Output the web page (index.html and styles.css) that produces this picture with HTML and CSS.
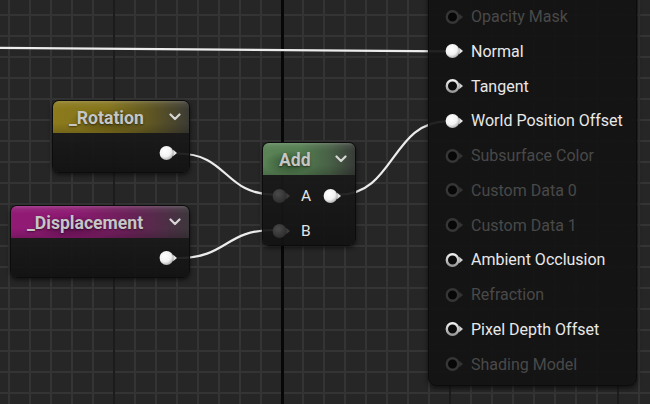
FILE: index.html
```html
<!DOCTYPE html>
<html>
<head>
<meta charset="utf-8">
<link rel="stylesheet" href="styles.css">
</head>
<body>
<div class="graph">
  <svg class="defs" width="0" height="0">
    <defs>
      <radialGradient id="gWhite" cx="40%" cy="35%" r="70%">
        <stop offset="0" stop-color="#ffffff"/>
        <stop offset="0.6" stop-color="#f2f2f2"/>
        <stop offset="1" stop-color="#a8a8a8"/>
      </radialGradient>
      <radialGradient id="gDark" cx="40%" cy="35%" r="70%">
        <stop offset="0" stop-color="#4a4a4a"/>
        <stop offset="1" stop-color="#2c2c2c"/>
      </radialGradient>
      <linearGradient id="gRing" x1="0" y1="0" x2="0" y2="1">
        <stop offset="0" stop-color="#f0f0f0"/>
        <stop offset="1" stop-color="#9a9a9a"/>
      </linearGradient>
      <symbol id="pin-fill" viewBox="0 0 20 16">
        <circle cx="7.5" cy="8" r="6.9" fill="url(#gWhite)"/>
        <path d="M14.2,4.8 L18,8 L14.2,11.2 Z" fill="#e6e6e6"/>
      </symbol>
      <symbol id="pin-dark" viewBox="0 0 20 16">
        <circle cx="7.5" cy="8" r="6.9" fill="url(#gDark)"/>
        <path d="M14.2,4.8 L18,8 L14.2,11.2 Z" fill="#3c3c3c"/>
      </symbol>
      <symbol id="pin-ring" viewBox="0 0 20 16">
        <circle cx="7.5" cy="8" r="5.7" fill="#0b0b0b" stroke="url(#gRing)" stroke-width="2.4"/>
        <path d="M14.2,4.8 L18,8 L14.2,11.2 Z" fill="#d0d0d0"/>
      </symbol>
      <symbol id="pin-off" viewBox="0 0 20 16">
        <circle cx="7.5" cy="8" r="5.7" fill="#070707" stroke="#363636" stroke-width="2.4"/>
        <path d="M14.2,4.8 L18,8 L14.2,11.2 Z" fill="#343434"/>
      </symbol>
      <symbol id="chev" viewBox="0 0 12 8">
        <path d="M1.5,1.5 L6,6 L10.5,1.5" fill="none" stroke="#d6d6d6" stroke-width="2.2" stroke-linecap="round" stroke-linejoin="round"/>
      </symbol>
    </defs>
  </svg>

  <svg class="wires" width="650" height="404" viewBox="0 0 650 404">
    <g fill="none" stroke="#ececec" stroke-width="2.2" stroke-linecap="round">
      <path d="M0,47.8 L447,51.3"/>
      <path d="M178,153.5 C228,153.5 224,194.5 274,194.5"/>
      <path d="M178,258 C228,258 224,230 274,230"/>
      <path d="M340,194.5 C394,194.5 392,121.3 447,121.3"/>
    </g>
  </svg>

  <div class="node node-rotation">
    <div class="node-head head-yellow">
      <span class="node-title">_Rotation</span>
      <svg class="chev"><use href="#chev"/></svg>
    </div>
    <div class="node-body param-body">
      <svg class="pin"><use href="#pin-fill"/></svg>
    </div>
  </div>

  <div class="node node-displacement">
    <div class="node-head head-magenta">
      <span class="node-title">_Displacement</span>
      <svg class="chev"><use href="#chev"/></svg>
    </div>
    <div class="node-body param-body">
      <svg class="pin"><use href="#pin-fill"/></svg>
    </div>
  </div>

  <div class="node node-add">
    <div class="node-head head-green">
      <span class="node-title">Add</span>
      <svg class="chev"><use href="#chev"/></svg>
    </div>
    <div class="node-body add-body">
      <div class="add-row">
        <svg class="pin"><use href="#pin-dark"/></svg>
        <span class="add-label">A</span>
        <svg class="pin"><use href="#pin-fill"/></svg>
      </div>
      <div class="add-row">
        <svg class="pin"><use href="#pin-dark"/></svg>
        <span class="add-label">B</span>
      </div>
    </div>
  </div>

  <div class="material">
    <div class="mrow off"><svg class="pin"><use href="#pin-off"/></svg><span>Opacity Mask</span></div>
    <div class="mrow"><svg class="pin"><use href="#pin-fill"/></svg><span>Normal</span></div>
    <div class="mrow"><svg class="pin"><use href="#pin-ring"/></svg><span>Tangent</span></div>
    <div class="mrow"><svg class="pin"><use href="#pin-fill"/></svg><span>World Position Offset</span></div>
    <div class="mrow off"><svg class="pin"><use href="#pin-off"/></svg><span>Subsurface Color</span></div>
    <div class="mrow off"><svg class="pin"><use href="#pin-off"/></svg><span>Custom Data 0</span></div>
    <div class="mrow off"><svg class="pin"><use href="#pin-off"/></svg><span>Custom Data 1</span></div>
    <div class="mrow"><svg class="pin"><use href="#pin-ring"/></svg><span>Ambient Occlusion</span></div>
    <div class="mrow off"><svg class="pin"><use href="#pin-off"/></svg><span>Refraction</span></div>
    <div class="mrow"><svg class="pin"><use href="#pin-ring"/></svg><span>Pixel Depth Offset</span></div>
    <div class="mrow off"><svg class="pin"><use href="#pin-off"/></svg><span>Shading Model</span></div>
  </div>
</div>
</body>
</html>
```

FILE: styles.css
```css
html, body {
  margin: 0;
  padding: 0;
  background: #262626;
}

.graph {
  position: relative;
  width: 650px;
  height: 404px;
  overflow: hidden;
  font-family: Roboto, "Noto Sans", "Liberation Sans", sans-serif;
  background-color: #262626;
  background-image:
    linear-gradient(to right, transparent 281px, #070707 281px, #070707 284px, transparent 284px),
    linear-gradient(to right, #1c1c1c 2px, transparent 2px),
    linear-gradient(to right, #343434 2px, transparent 2px),
    linear-gradient(to bottom, #343434 2px, transparent 2px);
  background-size:
    100% 100%,
    168px 100%,
    21px 100%,
    100% 21px;
  background-position:
    0 0,
    113px 0,
    8px 0,
    0 14px;
}

.defs {
  position: absolute;
  width: 0;
  height: 0;
}

.wires {
  position: absolute;
  left: 0;
  top: 0;
}

/* ---------- generic node ---------- */
.node {
  position: absolute;
  display: flex;
  flex-direction: column;
  border-radius: 7px;
  border: 1px solid #0c0c0c;
  box-shadow: 0 2px 4px rgba(0, 0, 0, 0.55);
  overflow: hidden;
  box-sizing: border-box;
}

.node-head {
  height: 32px;
  flex: none;
  display: flex;
  align-items: center;
  justify-content: space-between;
  padding: 1px 8px 0 16px;
  box-sizing: border-box;
  position: relative;
}

.node-head::before {
  content: "";
  position: absolute;
  inset: 0;
  background: linear-gradient(to bottom, rgba(255,255,255,0.18) 0, rgba(255,255,255,0.06) 3px, rgba(0,0,0,0) 8px, rgba(0,0,0,0) 22px, rgba(0,0,0,0.16) 100%);
}

.node-title {
  position: relative;
  font-size: 17.6px;
  font-weight: 700;
  color: #c6c6c6;
  text-shadow: 0 1px 2px rgba(0, 0, 0, 0.5);
}

.chev {
  position: relative;
  width: 12px;
  height: 8px;
  margin-top: -2px;
}

.head-yellow {
  background:
    radial-gradient(ellipse 40px 12px at 55px 20px, rgba(40, 34, 5, 0.5), rgba(40, 34, 5, 0) 100%),
    linear-gradient(to right, #8c7a1c 0%, #84741c 40%, #645a21 68%, #3c3b34 100%);
}

.head-magenta {
  background:
    radial-gradient(ellipse 40px 12px at 60px 21px, rgba(40, 5, 32, 0.5), rgba(40, 5, 32, 0) 100%),
    linear-gradient(to right, #911a75 0%, #8d1a72 35%, #6c2059 65%, #3c373b 100%);
}

.head-green {
  background:
    radial-gradient(ellipse 25px 12px at 26px 20px, rgba(10, 30, 10, 0.45), rgba(10, 30, 10, 0) 100%),
    linear-gradient(to right, #5a8356 0%, #537d50 40%, #486146 72%, #383b38 100%);
}

.node-body {
  flex: 1;
  background: linear-gradient(to bottom, rgba(24, 25, 24, 0.93), rgba(18, 18, 18, 0.93));
}

.pin {
  width: 20px;
  height: 16px;
  flex: none;
  display: block;
}

/* ---------- parameter nodes ---------- */
.node-rotation {
  left: 52px;
  top: 100px;
  width: 138px;
  height: 73px;
}

.node-displacement {
  left: 10px;
  top: 205px;
  width: 180px;
  height: 73px;
}

.param-body {
  display: flex;
  justify-content: flex-end;
  align-items: flex-start;
  padding: 12px 10px 0 0;
}

/* ---------- add node ---------- */
.node-add {
  left: 262px;
  top: 142px;
  width: 94px;
  height: 104px;
}

.add-body {
  padding: 3px 0 0 9px;
}

.add-row {
  display: flex;
  align-items: center;
  height: 35px;
}

.add-label {
  font-size: 15.5px;
  color: #e4e4e4;
  margin-left: 9px;
  width: 22px;
}

/* ---------- material result node ---------- */
.material {
  position: absolute;
  left: 428px;
  top: -20px;
  width: 209px;
  box-sizing: border-box;
  padding: 18.3px 0 3px 0;
  border-radius: 8px;
  border: 1px solid #0c0c0c;
  background: rgba(19, 19, 19, 0.93);
  box-shadow: 0 2px 5px rgba(0, 0, 0, 0.6);
}

.mrow {
  height: 34.75px;
  display: flex;
  align-items: center;
  padding-left: 16px;
  font-size: 16px;
  color: #e8e8e8;
}

.mrow span {
  margin-left: 6px;
  white-space: nowrap;
}

.mrow.off {
  color: #494949;
}
```
